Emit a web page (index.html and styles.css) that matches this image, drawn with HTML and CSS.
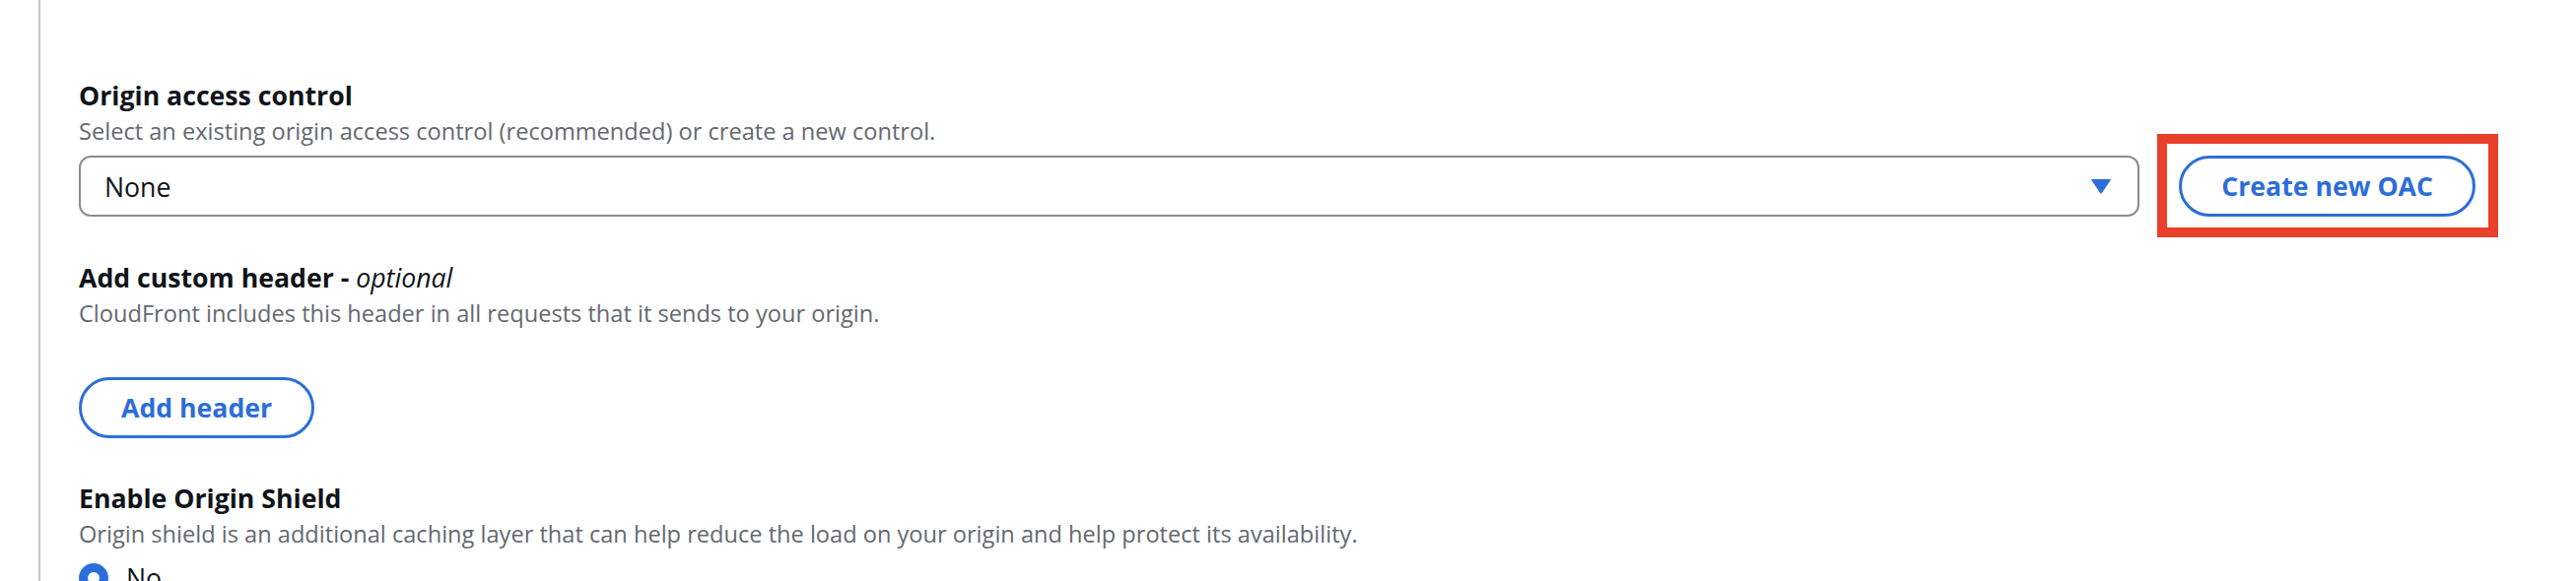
FILE: index.html
```html
<!DOCTYPE html>
<html lang="en">
<head>
<meta charset="utf-8">
<title>Origin settings</title>
<link rel="stylesheet" href="styles.css">
</head>
<body>
<div class="page">
  <div class="panel">
    <div class="field field-oac">
      <div class="label">Origin access control</div>
      <div class="desc">Select an existing origin access control (recommended) or create a new control.</div>
      <div class="control-row">
        <div class="select">
          <span class="select-value">None</span>
          <svg class="caret" width="20" height="15" viewBox="0 0 20 15" aria-hidden="true"><polygon points="0.5,0.5 19.5,0.5 10,14.5" fill="#2c6ed9" stroke="#2c6ed9" stroke-width="1" stroke-linejoin="round"/></svg>
        </div>
        <button class="btn btn-highlight">Create new OAC</button>
      </div>
    </div>
    <div class="field field-header">
      <div class="label">Add custom header - <i class="optional">optional</i></div>
      <div class="desc">CloudFront includes this header in all requests that it sends to your origin.</div>
      <button class="btn btn-add">Add header</button>
    </div>
    <div class="field field-shield">
      <div class="label">Enable Origin Shield</div>
      <div class="desc">Origin shield is an additional caching layer that can help reduce the load on your origin and help protect its availability.</div>
      <div class="radio-row">
        <span class="radio"></span>
        <span class="radio-label">No</span>
      </div>
    </div>
  </div>
</div>
</body>
</html>
```
FILE: styles.css
```css
html, body {
  margin: 0;
  padding: 0;
  background: #ffffff;
}
body {
  font-family: "Open Sans", "Noto Sans", Arial, sans-serif;
  color: #0f141a;
  overflow: hidden;
}
.page {
  padding-left: 39px;
  min-height: 100vh;
  display: flex;
}
.panel {
  flex: 1;
  border-left: 2px solid #c6c6cd;
  padding: 80px 102px 0 39px;
  min-height: 100vh;
  box-sizing: border-box;
}
.field {
  display: flex;
  flex-direction: column;
  align-items: flex-start;
}
.label {
  font-size: 26.67px;
  font-weight: 700;
  line-height: 33px;
  color: #0f141a;
}
.optional {
  font-weight: 400;
  font-style: italic;
}
.desc {
  font-size: 23.6px;
  line-height: 33px;
  color: #656871;
  margin-top: 4px;
}
.control-row {
  align-self: stretch;
  display: flex;
  align-items: center;
  gap: 40px;
  margin-top: 8px;
}
.select {
  flex: 1;
  height: 62px;
  box-sizing: border-box;
  border: 2px solid #8c8c94;
  border-radius: 12px;
  display: flex;
  align-items: center;
  justify-content: space-between;
  padding: 0 27px 0 24px;
}
.select-value {
  font-size: 26.67px;
  line-height: 33px;
  color: #0f141a;
}
.caret {
  display: block;
}
.btn {
  font-family: "Open Sans", "Noto Sans", Arial, sans-serif;
  font-size: 26.67px;
  font-weight: 700;
  color: #2c6ed9;
  background: #ffffff;
  border: 3px solid #2c6ed9;
  border-radius: 32px;
  height: 62px;
  padding: 0 40px;
  box-sizing: border-box;
  line-height: 1;
  cursor: pointer;
}
.btn-highlight {
  position: relative;
}
.btn-highlight::after {
  content: "";
  position: absolute;
  top: -25px;
  left: -25px;
  right: -26px;
  bottom: -24px;
  border: 10px solid #e8402a;
  pointer-events: none;
}
.field-header {
  margin-top: 45px;
}
.btn-add {
  margin-top: 48px;
}
.field-shield {
  margin-top: 44px;
}
.radio-row {
  display: flex;
  align-items: center;
  gap: 18px;
  margin-top: 11px;
}
.radio {
  width: 30px;
  height: 30px;
  border-radius: 50%;
  box-sizing: border-box;
  border: 9px solid #2c6ed9;
  background: #ffffff;
}
.radio-label {
  font-size: 26.67px;
  line-height: 33px;
  color: #0f141a;
}
```
